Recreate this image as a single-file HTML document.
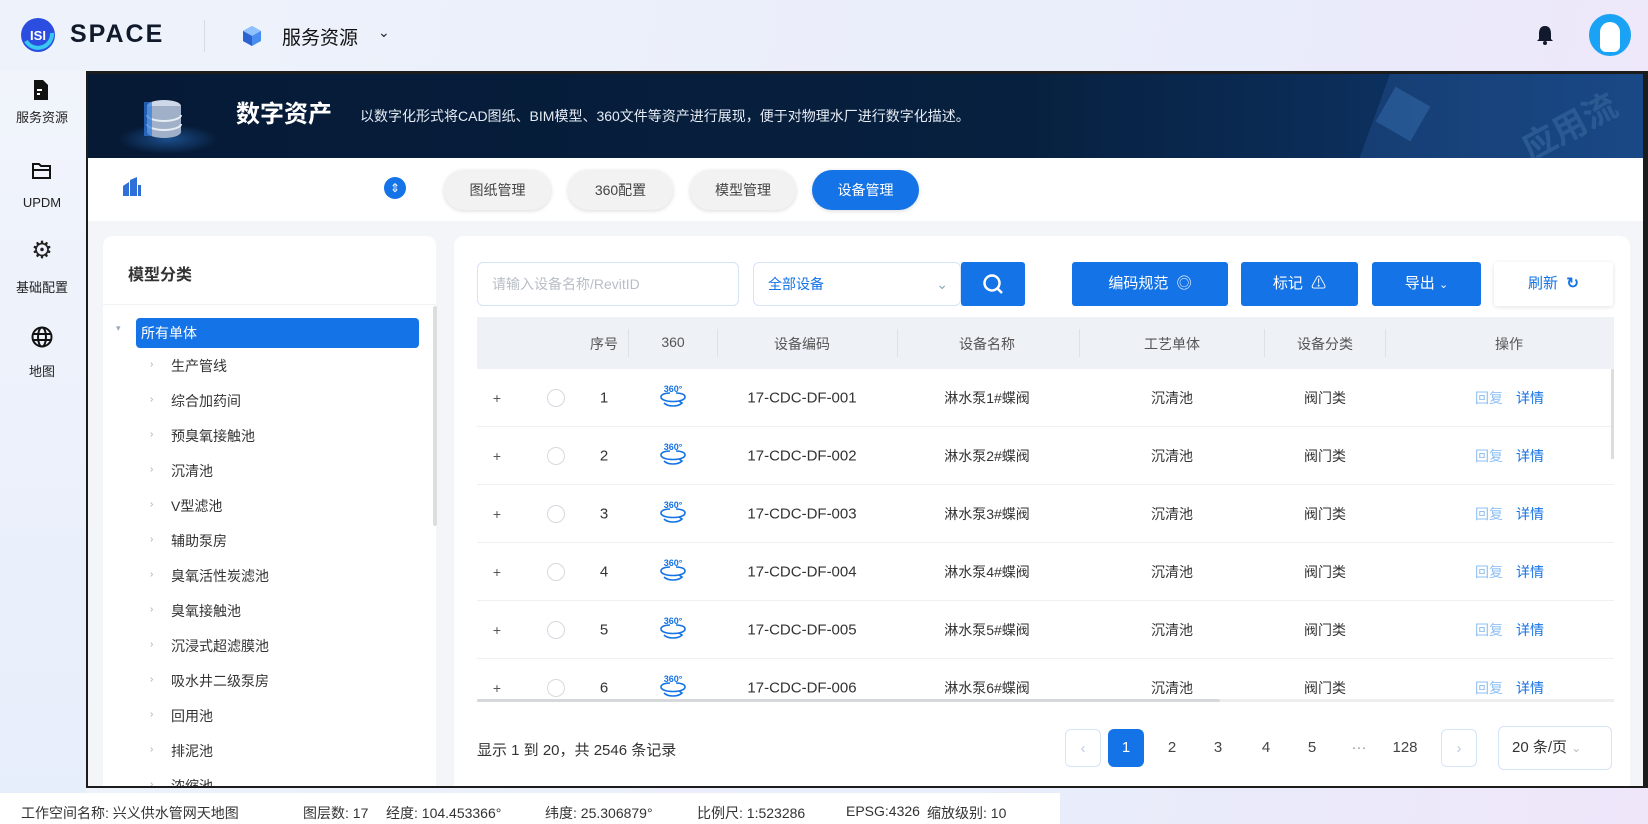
<!DOCTYPE html>
<html><head><meta charset="utf-8"><style>
*{box-sizing:border-box;margin:0;padding:0}
body{width:1648px;height:824px;overflow:hidden;font-family:"Liberation Sans","Noto Sans CJK SC",sans-serif;background:linear-gradient(100deg,#eef3fb 0%,#e9ecfa 70%,#efe6fa 100%);position:relative;color:#333}
.abs{position:absolute}
.side{left:0;top:71px;width:86px;height:722px;background:linear-gradient(180deg,#f1f4fb,#e7eefb)}
.side .it{position:absolute;left:0;width:84px;text-align:center;font-size:13px;color:#222}
.frame{left:86px;top:71px;width:1562px;height:717px;background:#1c1c1c;padding:3px 5px 2px 2px}
.inner{position:relative;width:100%;height:100%;background:#f3f5f9;overflow:hidden}
.banner{position:absolute;left:0;top:0;width:100%;height:84px;background:linear-gradient(90deg,#061a36 0%,#07203f 60%,#0b2d58 80%,#123f78 100%)}
.tabsbar{position:absolute;left:0;top:84px;width:100%;height:63px;background:#fff}
.tab{position:absolute;top:12px;height:40px;border-radius:20px;background:#f2f2f2;box-shadow:0 1px 4px rgba(0,0,0,.15);font-size:14px;line-height:40px;text-align:center;color:#444}
.panel{position:absolute;background:#fff;border-radius:10px}
.tree{position:absolute;left:68px;font-size:14px;color:#333}
.arr{position:absolute;left:47px;color:#aab;font-size:10px}
.btn{position:absolute;top:174px;height:44px;background:#1473e6;color:#fff;border-radius:3px;font-size:15px;line-height:44px;text-align:center}
.th{position:absolute;top:30px;font-size:14px;color:#555;transform:translateX(-50%)}
.row{position:absolute;left:0;width:1137px;height:58px;border-bottom:1px solid #eef0f4;font-size:15px}
.c{position:absolute;top:50%;transform:translate(-50%,-50%);white-space:nowrap}
.pg{position:absolute;top:493px;height:38px;width:36px;font-size:15px;line-height:38px;text-align:center;color:#444;border-radius:6px}
.st{position:absolute;top:803px;font-size:14px;color:#333}
</style></head><body>
<svg class="abs" style="left:20px;top:17px" width="36" height="36" viewBox="0 0 36 36"><circle cx="18" cy="18" r="17" fill="#2b4de0"/><path d="M6 24 A14 14 0 0 0 32 16" stroke="#38c8f0" stroke-width="4" fill="none"/><text x="18" y="23" font-size="13" font-weight="bold" fill="#fff" text-anchor="middle" font-family="Liberation Sans">ISI</text></svg>
<div class="abs" style="left:70px;top:20px;font-size:25px;font-weight:bold;color:#101a2a;letter-spacing:2px">SPACE</div>
<div class="abs" style="left:204px;top:20px;width:1px;height:32px;background:#d8dce6"></div>
<svg class="abs" style="left:242px;top:25px" width="20" height="22" viewBox="0 0 20 22"><path d="M10 1 L19 6 V16 L10 21 L1 16 V6Z" fill="#4a8df0"/><path d="M10 1 L19 6 L10 11 L1 6Z" fill="#8fc0ff"/><path d="M10 11 V21 L1 16 V6Z" fill="#2c63d0"/></svg>
<div class="abs" style="left:282px;top:23px;font-size:19px;color:#111">服务资源</div>
<div class="abs" style="left:378px;top:24px;font-size:14px;color:#222">⌄</div>
<svg class="abs" style="left:1535px;top:24px" width="20" height="22" viewBox="0 0 20 22"><path d="M10 2 C5 2 4 6 4 10 V15 L2 17 H18 L16 15 V10 C16 6 15 2 10 2Z" fill="#111a2c"/><circle cx="10" cy="19" r="2" fill="#111a2c"/></svg>
<div class="abs" style="left:1589px;top:14px;width:42px;height:42px;border-radius:50%;background:#1aa3f5;border:3px solid #1aa3f5;overflow:hidden"><div style="position:absolute;left:8px;top:5px;width:20px;height:30px;background:#fff;border-radius:10px 10px 6px 6px"></div></div>
<div class="abs side">
<svg class="abs" style="left:33px;top:8px" width="16" height="22" viewBox="0 0 16 22"><path d="M1 1 H10 L15 6 V21 H1Z" fill="#111"/><path d="M4 11 H9 M4 15 H7" stroke="#fff" stroke-width="2"/></svg>
<div class="it" style="top:36px">服务资源</div>
<svg class="abs" style="left:31px;top:91px" width="22" height="18" viewBox="0 0 22 18"><path d="M2 2 H8 L10 4 H19 V16 H2Z M2 8 H20" stroke="#111" stroke-width="2" fill="none"/></svg>
<div class="it" style="top:124px">UPDM</div>
<div class="it" style="top:168px;font-size:24px;line-height:24px">⚙</div>
<div class="it" style="top:206px">基础配置</div>
<svg class="abs" style="left:31px;top:255px" width="22" height="22" viewBox="0 0 22 22"><circle cx="11" cy="11" r="9.5" stroke="#111" stroke-width="2" fill="none"/><ellipse cx="11" cy="11" rx="4" ry="9.5" stroke="#111" stroke-width="2" fill="none"/><path d="M2 8 H20 M2 14 H20" stroke="#111" stroke-width="2"/></svg>
<div class="it" style="top:290px">地图</div>
</div>
<div class="abs frame"><div class="inner">
<div class="banner">
<div style="position:absolute;left:30px;top:50px;width:100px;height:30px;border-radius:50%;background:radial-gradient(#1b4e8c,transparent 70%)"></div>
<svg style="position:absolute;left:56px;top:24px" width="40" height="42" viewBox="0 0 40 42"><ellipse cx="20" cy="8" rx="17" ry="6" fill="#cfd8e8"/><path d="M3 8 V34 A17 6 0 0 0 37 34 V8" fill="#9fb0c8"/><path d="M3 17 A17 6 0 0 0 37 17 M3 26 A17 6 0 0 0 37 26" stroke="#e6ecf5" stroke-width="2" fill="none"/><rect x="0" y="4" width="8" height="34" fill="#2f7be0" opacity=".7"/></svg>
<div style="position:absolute;left:148px;top:20px;font-size:24px;font-weight:bold;color:#fff">数字资产</div>
<div style="position:absolute;left:272px;top:32px;font-size:14px;color:#e6ecf5">以数字化形式将CAD图纸、BIM模型、360文件等资产进行展现，便于对物理水厂进行数字化描述。</div>
<div style="position:absolute;left:1230px;top:0;width:330px;height:84px;background:linear-gradient(110deg,transparent 0 20%,rgba(40,90,160,.35) 20%);"></div>
<div style="position:absolute;left:1295px;top:20px;width:40px;height:40px;background:#2a5c9a;transform:rotate(30deg);opacity:.8"></div>
<div style="position:absolute;left:1440px;top:20px;font-size:34px;font-weight:bold;color:#2b5a92;transform:rotate(-28deg)">应用流程</div>
</div>
<div class="tabsbar">
<svg style="position:absolute;left:34px;top:19px" width="20" height="20" viewBox="0 0 20 20"><path d="M1 19 V9 L7 5 V19Z M8 19 V3 L15 0 V19Z M16 19 V8 H19 V19Z" fill="#2f6fd8"/></svg>
<div style="position:absolute;left:296px;top:19px;width:22px;height:22px;border-radius:50%;background:#1473e6;color:#fff;font-size:12px;line-height:22px;text-align:center">⇕</div>
<div class="tab" style="left:356px;width:107px">图纸管理</div>
<div class="tab" style="left:480px;width:105px">360配置</div>
<div class="tab" style="left:602px;width:106px">模型管理</div>
<div class="tab" style="left:724px;width:107px;background:#1473e6;color:#fff">设备管理</div>
</div>
<div class="panel" style="left:15px;top:162px;width:333px;height:600px">
<div style="position:absolute;left:25px;top:25px;font-size:16px;font-weight:bold;color:#333">模型分类</div>
<div style="position:absolute;left:0;top:68px;width:333px;height:1px;background:#f0f2f5"></div>
<div style="position:absolute;left:330px;top:70px;width:4px;height:220px;background:#ddd;border-radius:2px"></div>
<div style="position:absolute;left:13px;top:87px;color:#9ab;font-size:9px">▾</div>
<div style="position:absolute;left:33px;top:82px;width:283px;height:30px;background:#1473e6;border-radius:4px;color:#fff;font-size:14px;line-height:30px;padding-left:5px">所有单体</div>
<div class="tree" style="top:120px">生产管线</div><div class="arr" style="top:123px">›</div>
<div class="tree" style="top:155px">综合加药间</div><div class="arr" style="top:158px">›</div>
<div class="tree" style="top:190px">预臭氧接触池</div><div class="arr" style="top:193px">›</div>
<div class="tree" style="top:225px">沉清池</div><div class="arr" style="top:228px">›</div>
<div class="tree" style="top:260px">V型滤池</div><div class="arr" style="top:263px">›</div>
<div class="tree" style="top:295px">辅助泵房</div><div class="arr" style="top:298px">›</div>
<div class="tree" style="top:330px">臭氧活性炭滤池</div><div class="arr" style="top:333px">›</div>
<div class="tree" style="top:365px">臭氧接触池</div><div class="arr" style="top:368px">›</div>
<div class="tree" style="top:400px">沉浸式超滤膜池</div><div class="arr" style="top:403px">›</div>
<div class="tree" style="top:435px">吸水井二级泵房</div><div class="arr" style="top:438px">›</div>
<div class="tree" style="top:470px">回用池</div><div class="arr" style="top:473px">›</div>
<div class="tree" style="top:505px">排泥池</div><div class="arr" style="top:508px">›</div>
<div class="tree" style="top:540px">浓缩池</div><div class="arr" style="top:543px">›</div>
</div>
<div class="panel" style="left:366px;top:162px;width:1176px;height:600px">
<div style="position:absolute;left:23px;top:26px;width:262px;height:44px;border:1px solid #d6e4f8;border-radius:6px;font-size:14px;color:#b8bec8;line-height:42px;padding-left:14px">请输入设备名称/RevitID</div>
<div style="position:absolute;left:299px;top:26px;width:208px;height:44px;border:1px solid #d6e4f8;border-radius:6px;font-size:14px;color:#1473e6;line-height:42px;padding-left:14px">全部设备<span style="position:absolute;right:12px;color:#8ab">⌄</span></div>
<div style="position:absolute;left:507px;top:26px;width:64px;height:44px;background:#1473e6;border-radius:3px"><svg style="position:absolute;left:21px;top:11px" width="22" height="22" viewBox="0 0 22 22"><circle cx="10" cy="10" r="7.5" stroke="#fff" stroke-width="2.5" fill="none"/><path d="M15 15 L20 20" stroke="#fff" stroke-width="2.5"/></svg></div>
<div class="btn" style="left:618px;top:26px;width:156px">编码规范 &nbsp;◎</div>
<div class="btn" style="left:787px;top:26px;width:117px">标记 &nbsp;⚠</div>
<div class="btn" style="left:918px;top:26px;width:109px">导出 <span style="font-size:11px">⌄</span></div>
<div style="position:absolute;left:1040px;top:26px;width:119px;height:44px;background:#fff;box-shadow:0 1px 5px rgba(0,0,0,.12);border-radius:3px;color:#1473e6;font-size:15px;line-height:44px;text-align:center">刷新 &nbsp;<b>↻</b></div>
<div style="position:absolute;left:23px;top:81px;width:1137px;height:385px;overflow:hidden">
<div style="position:absolute;left:0;top:0;width:1137px;height:52px;background:#eef1f6">
<div class="th" style="left:127px;top:17px">序号</div>
<div class="th" style="left:196px;top:17px">360</div>
<div class="th" style="left:325px;top:17px">设备编码</div>
<div class="th" style="left:510px;top:17px">设备名称</div>
<div class="th" style="left:695px;top:17px">工艺单体</div>
<div class="th" style="left:848px;top:17px">设备分类</div>
<div class="th" style="left:1032px;top:17px">操作</div>
<div style="position:absolute;left:151px;top:12px;width:1px;height:28px;background:#dde2ea"></div>
<div style="position:absolute;left:240px;top:12px;width:1px;height:28px;background:#dde2ea"></div>
<div style="position:absolute;left:420px;top:12px;width:1px;height:28px;background:#dde2ea"></div>
<div style="position:absolute;left:602px;top:12px;width:1px;height:28px;background:#dde2ea"></div>
<div style="position:absolute;left:787px;top:12px;width:1px;height:28px;background:#dde2ea"></div>
<div style="position:absolute;left:908px;top:12px;width:1px;height:28px;background:#dde2ea"></div>
</div>
<div id="rows"></div>
<div style="position:absolute;left:0;top:382px;width:1137px;height:4px;background:#eee"></div>
<div style="position:absolute;left:0;top:382px;width:743px;height:4px;background:#d6d8dc;border-radius:2px"></div>
<div style="position:absolute;left:1134px;top:52px;width:3px;height:90px;background:#ddd"></div>
</div>
<div style="position:absolute;left:23px;top:503px;font-size:15px;color:#333">显示 1 到 20，共 2546 条记录</div>
<div class="pg" style="left:611px;border:1px solid #d6e4f8;color:#b8cbe6">‹</div>
<div class="pg" style="left:654px;background:#1473e6;color:#fff">1</div>
<div class="pg" style="left:700px">2</div>
<div class="pg" style="left:746px">3</div>
<div class="pg" style="left:794px">4</div>
<div class="pg" style="left:840px">5</div>
<div class="pg" style="left:887px;color:#999">···</div>
<div class="pg" style="left:929px;width:44px">128</div>
<div class="pg" style="left:987px;border:1px solid #d6e4f8;color:#b8cbe6">›</div>
<div style="position:absolute;left:1044px;top:490px;width:114px;height:44px;border:1px solid #d6e4f8;border-radius:6px;font-size:15px;line-height:42px;padding-left:13px;color:#333">20 条/页 <span style="color:#bbb;font-size:12px">⌄</span></div>
</div>
</div></div>
<div class="abs" style="left:0;top:793px;width:1060px;height:31px;background:#fff"></div>
<div class="st" style="left:21px">工作空间名称: 兴义供水管网天地图</div>
<div class="st" style="left:303px">图层数: 17</div>
<div class="st" style="left:386px">经度: 104.453366°</div>
<div class="st" style="left:545px">纬度: 25.306879°</div>
<div class="st" style="left:697px">比例尺: 1:523286</div>
<div class="st" style="left:846px">EPSG:4326</div>
<div class="st" style="left:927px">缩放级别: 10</div>
<script>
var h='';
for(var i=1;i<=6;i++){
var t=52+(i-1)*58;
h+='<div class="row" style="top:'+t+'px">'+
'<div class="c" style="left:20px;font-size:14px;color:#555">+</div>'+
'<div class="c" style="left:79px;width:18px;height:18px;border:1px solid #d6d9de;border-radius:50%"></div>'+
'<div class="c" style="left:127px">'+i+'</div>'+
'<div class="c" style="left:196px"><svg width="30" height="26" viewBox="0 0 30 26"><text x="15" y="9" font-size="9" fill="#1473e6" text-anchor="middle" font-family="Liberation Sans" font-weight="bold">360°</text><path d="M3 14 C3 20 27 20 27 14 M3 14 C3 11 8 10 12 10 M27 14 C27 11 22 10 18 10 M6 20 C10 24 20 24 24 20 L21 18" stroke="#1473e6" stroke-width="1.6" fill="none"/></svg></div>'+
'<div class="c" style="left:325px">17-CDC-DF-00'+i+'</div>'+
'<div class="c" style="left:510px;font-size:14px">淋水泵'+i+'#蝶阀</div>'+
'<div class="c" style="left:695px;font-size:14px">沉清池</div>'+
'<div class="c" style="left:848px;font-size:14px">阀门类</div>'+
'<div class="c" style="left:1012px;font-size:14px;color:#8fc0f5">回复</div>'+
'<div class="c" style="left:1053px;font-size:14px;color:#1473e6">详情</div></div>';
}
document.getElementById('rows').innerHTML=h;
</script>
</body></html>
